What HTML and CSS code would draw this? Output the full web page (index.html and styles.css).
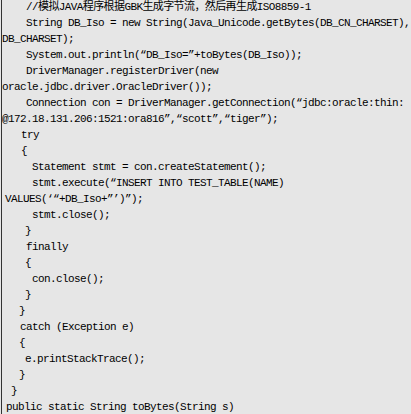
FILE: index.html
```html
<!DOCTYPE html>
<html>
<head>
<meta charset="utf-8">
<link rel="stylesheet" href="styles.css">
</head>
<body>
<div class="code">
  <div class="ln in-24">//模拟JAVA程序根据GBK生成字节流，然后再生成ISO8859-1</div>
  <div class="ln in-24">String DB_Iso = new String(Java_Unicode.getBytes(DB_CN_CHARSET),</div>
  <div class="ln in-0">DB_CHARSET);</div>
  <div class="ln in-24">System.out.println(“DB_Iso=”+toBytes(DB_Iso));</div>
  <div class="ln in-24">DriverManager.registerDriver(new</div>
  <div class="ln in-0">oracle.jdbc.driver.OracleDriver());</div>
  <div class="ln in-24">Connection con = DriverManager.getConnection(“jdbc:oracle:thin:</div>
  <div class="ln in-0">@172.18.131.206:1521:ora816”,“scott”,“tiger”);</div>
  <div class="ln in-19">try</div>
  <div class="ln in-19">{</div>
  <div class="ln in-30">Statement stmt = con.createStatement();</div>
  <div class="ln in-30">stmt.execute(“INSERT INTO TEST_TABLE(NAME)</div>
  <div class="ln in-3">VALUES(‘“+DB_Iso+”’)”);</div>
  <div class="ln in-30">stmt.close();</div>
  <div class="ln in-23">}</div>
  <div class="ln in-24">finally</div>
  <div class="ln in-23">{</div>
  <div class="ln in-30">con.close();</div>
  <div class="ln in-23">}</div>
  <div class="ln in-17">}</div>
  <div class="ln in-18">catch (Exception e)</div>
  <div class="ln in-17">{</div>
  <div class="ln in-23">e.printStackTrace();</div>
  <div class="ln in-17">}</div>
  <div class="ln in-9">}</div>
  <div class="ln in-4">public static String toBytes(String s)</div>
</div>
</body>
</html>
```
FILE: styles.css
```css
html, body {
  margin: 0;
  padding: 0;
  background: #e6e6e6;
  overflow: hidden;
}
.code {
  margin-left: 1px;
  margin-top: -1px;
  border-left: 1px solid #333333;
  background: #e6e6e6;
  color: #000000;
  font-family: "Liberation Mono", "Noto Sans CJK SC", monospace;
  font-size: 11px;
  letter-spacing: -0.6px;
  line-height: 16px;
  height: 420px;
}
.ln {
  height: 16px;
  white-space: pre;
}
.in-0 { padding-left: 0; }
.in-3 { padding-left: 3px; }
.in-4 { padding-left: 4px; }
.in-9 { padding-left: 9px; }
.in-17 { padding-left: 17px; }
.in-18 { padding-left: 18px; }
.in-19 { padding-left: 19px; }
.in-23 { padding-left: 23px; }
.in-24 { padding-left: 24px; }
.in-30 { padding-left: 30px; }
```
